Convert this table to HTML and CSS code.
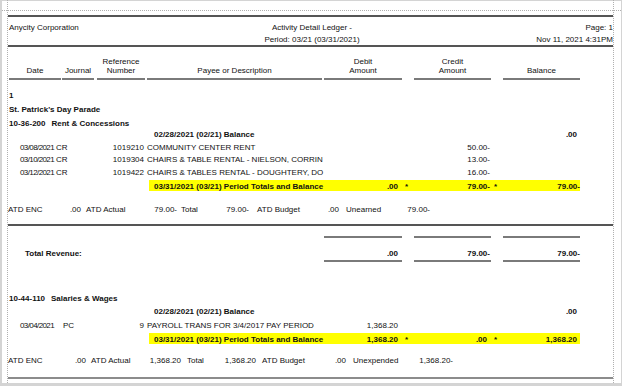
FILE: index.html
```html
<!DOCTYPE html>
<html>
<head>
<meta charset="utf-8">
<title>Activity Detail Ledger</title>
<link rel="stylesheet" href="styles.css">
</head>
<body>
<div class="sheet">
  <div class="guide-h"></div>
  <div class="guide-v"></div>
  <div class="report">
    <div class="rule"></div>
    <div class="head">
      <div class="h-left">Anycity Corporation</div>
      <div class="h-center">Activity Detail Ledger -</div>
      <div class="h-right">Page: 1</div>
      <div class="h-left"></div>
      <div class="h-center">Period: 03/21 (03/31/2021)</div>
      <div class="h-right">Nov 11, 2021 4:31PM</div>
    </div>
    <div class="rule"></div>

    <div class="colhead">
      <div class="ch ch-date">Date</div>
      <div class="ch ch-jr">Journal</div>
      <div class="ch ch-ref">Reference<br>Number</div>
      <div class="ch ch-desc">Payee or Description</div>
      <div class="ch ch-debit">Debit<br>Amount</div>
      <div class="ch ch-credit">Credit<br>Amount</div>
      <div class="ch ch-bal">Balance</div>
    </div>

    <div class="b line-no">1</div>
    <div class="b line-name">St. Patrick's Day Parade</div>
    <div class="b acct acct-1"><span class="acct-no">10-36-200</span>Rent &amp; Concessions</div>

    <div class="row r-bal b">
      <div class="span-open">02/28/2021 (02/21) Balance</div>
      <div class="num c-bal">.00</div>
    </div>
    <div class="row r-tx">
      <div class="dt">03/08/2021</div><div class="jr">CR</div><div class="rf">1019210</div>
      <div class="ds">COMMUNITY CENTER RENT</div>
      <div class="num"></div><div></div><div class="num">50.00<span class="m">-</span></div><div></div><div class="num"></div>
    </div>
    <div class="row r-tx">
      <div class="dt">03/10/2021</div><div class="jr">CR</div><div class="rf">1019304</div>
      <div class="ds">CHAIRS &amp; TABLE RENTAL - NIELSON, CORRIN</div>
      <div class="num"></div><div></div><div class="num">13.00<span class="m">-</span></div><div></div><div class="num"></div>
    </div>
    <div class="row r-tx">
      <div class="dt">03/12/2021</div><div class="jr">CR</div><div class="rf">1019422</div>
      <div class="ds">CHAIRS &amp; TABLES RENTAL - DOUGHTERY, DO</div>
      <div class="num"></div><div></div><div class="num">16.00<span class="m">-</span></div><div></div><div class="num"></div>
    </div>
    <div class="hl hl-1">
      <div class="hl-text">03/31/2021 (03/21) Period Totals and Balance</div>
      <div class="num">.00</div><div class="star">*</div>
      <div class="num">79.00<span class="m">-</span></div><div class="star">*</div>
      <div class="num">79.00<span class="m">-</span></div>
    </div>

    <div class="atd atd-1">
      <span>ATD ENC</span><span class="v">.00</span>
      <span class="p5">ATD Actual</span><span class="v">79.00-</span>
      <span class="p4">Total</span><span class="v">79.00-</span>
      <span class="p8">ATD Budget</span><span class="v">.00</span>
      <span class="p7">Unearned</span><span class="v">79.00-</span>
    </div>

    <div class="rule rule-mid"></div>
    <div class="segs segs-1"><i></i><i></i><i></i></div>

    <div class="row r-total b">
      <div class="span-total">Total Revenue:</div>
      <div class="num">.00</div><div></div>
      <div class="num">79.00<span class="m">-</span></div><div></div>
      <div class="num">79.00<span class="m">-</span></div>
    </div>
    <div class="segs"><i></i><i></i><i></i></div>

    <div class="b acct acct-2"><span class="acct-no">10-44-110</span>Salaries &amp; Wages</div>
    <div class="row r-bal r-bal-2 b">
      <div class="span-open">02/28/2021 (02/21) Balance</div>
      <div class="num c-bal">.00</div>
    </div>
    <div class="row r-tx r-tx-2">
      <div class="dt">03/04/2021</div><div class="jr jr-pc">PC</div><div class="rf">9</div>
      <div class="ds">PAYROLL TRANS FOR 3/4/2017 PAY PERIOD</div>
      <div class="num">1,368.20</div><div></div><div class="num"></div><div></div><div class="num"></div>
    </div>
    <div class="hl hl-2">
      <div class="hl-text">03/31/2021 (03/21) Period Totals and Balance</div>
      <div class="num">1,368.20</div><div class="star">*</div>
      <div class="num">.00</div><div class="star">*</div>
      <div class="num">1,368.20</div>
    </div>

    <div class="atd atd-2">
      <span>ATD ENC</span><span class="v">.00</span>
      <span class="p5">ATD Actual</span><span class="v">1,368.20</span>
      <span class="p6">Total</span><span class="v">1,368.20</span>
      <span class="p6">ATD Budget</span><span class="v">.00</span>
      <span class="p7">Unexpended</span><span class="v">1,368.20-</span>
    </div>

    <div class="page-end"></div>
  </div>
</div>
</body>
</html>
```

FILE: styles.css
```css
html, body {
  margin: 0;
  padding: 0;
}
body {
  width: 622px;
  height: 386px;
  overflow: hidden;
  background: #d4d4d4;
  font-family: "Liberation Sans", Arial, sans-serif;
  font-size: 8px;
  color: #111;
}
.sheet {
  position: relative;
  margin: 1px 1px 0 2px;
  height: 382px;
  background: #fff;
}
.guide-h {
  position: absolute;
  left: 0;
  right: 0;
  top: 9px;
  border-top: 1px dotted #b0b0b0;
}
.guide-v {
  position: absolute;
  top: -1px;
  bottom: 0;
  left: 5px;
  width: 605px;
  border-left: 1px dotted #b0b0b0;
  border-right: 1px dotted #b0b0b0;
}
.report {
  position: relative;
  margin-left: 6px;
  width: 605px;
  padding-top: 14px;
}
.rule {
  height: 2px;
  background: #555;
}
.b { font-weight: bold; }

/* page header */
.head {
  display: grid;
  grid-template-columns: 1fr auto 1fr;
  grid-template-rows: 12px 11px;
  padding-top: 5px;
  white-space: nowrap;
}
.h-left { padding-left: 1px; line-height: 12px; }
.h-center { text-align: center; line-height: 12px; padding-left: 3px; }
.h-right { text-align: right; line-height: 12px; }

/* column header */
.colhead {
  display: flex;
  align-items: flex-end;
  padding-top: 10px;
}
.ch {
  line-height: 9px;
  text-align: center;
  padding-bottom: 3px;
  border-bottom: 2px solid #7a7a7a;
  white-space: nowrap;
}
.ch-date { margin-left: 1px; width: 52px; }
.ch-jr { margin-left: 1px; width: 32px; }
.ch-ref { margin-left: 3px; width: 48px; }
.ch-desc { margin-left: 2px; width: 175px; }
.ch-debit { margin-left: 2px; width: 78px; }
.ch-credit { margin-left: 12px; width: 77px; }
.ch-bal { margin-left: 12px; width: 77px; }

/* group titles */
.line-no { margin-top: 9px; line-height: 14px; padding-left: 1px; }
.line-name { line-height: 14px; padding-left: 1px; }
.acct { line-height: 11px; padding-left: 1px; white-space: nowrap; }
.acct-1 { margin-top: 1px; }
.acct-2 { margin-top: 31px; line-height: 12px; }
.acct-no { margin-right: 6px; }

/* ledger rows */
.row {
  display: grid;
  grid-template-columns: 46px 30px 60px 180px 74px 16px 73px 16px 74px;
  line-height: 12.5px;
  white-space: nowrap;
}
.dt {
  padding-left: 12px;
  letter-spacing: -0.6px;
}
.jr { padding-left: 2px; }
.jr-pc { padding-left: 9px; }
.rf { text-align: right; }
.ds { padding-left: 3px; overflow: hidden; }
.num { text-align: right; }
.m { margin-right: -3px; }
.span-open { grid-column: 4 / 9; padding-left: 10px; }
.c-bal { grid-column: 9; }
.r-bal-2 { line-height: 14px; }
.r-tx-2 { line-height: 13px; }
.span-total { grid-column: 1 / 5; padding-left: 17px; }
.r-total { margin-top: 10px; line-height: 12px; }

/* highlighted period totals */
.hl {
  display: grid;
  grid-template-columns: 175px 74px 16px 73px 16px 74px;
  margin-left: 141px;
  width: 431px;
  height: 11px;
  line-height: 13px;
  background: #ffff00;
  font-weight: bold;
  white-space: nowrap;
}
.hl-1 { margin-top: 1px; }
.hl-2 { margin-top: 1px; }
.hl-text { padding-left: 5px; }
.star { padding-left: 7px; }

/* ATD summary lines */
.atd {
  display: grid;
  line-height: 13px;
  white-space: nowrap;
}
.atd-1 {
  margin-top: 12px;
  grid-template-columns: 52px 21px 59px 37px 33px 39px 56px 34px 51px 40px;
}
.atd-2 {
  margin-top: 10px;
  grid-template-columns: 52px 26px 54px 41px 29px 46px 49px 41px 54px 53px;
}
.atd .v { text-align: right; }
.p4 { padding-left: 4px; }
.p5 { padding-left: 5px; }
.p6 { padding-left: 6px; }
.p7 { padding-left: 7px; }
.p8 { padding-left: 8px; }

.rule-mid { margin-top: 8px; }

/* total underline segments */
.segs {
  display: flex;
  gap: 12px;
  padding-left: 316px;
}
.segs i {
  display: block;
  width: 77px;
  height: 2px;
  background: #7a7a7a;
}
.segs i:first-child { width: 78px; }
.segs-1 { margin-top: 10px; }

.page-end {
  margin-top: 10px;
  height: 2px;
  background: #8c8c8c;
}
```
